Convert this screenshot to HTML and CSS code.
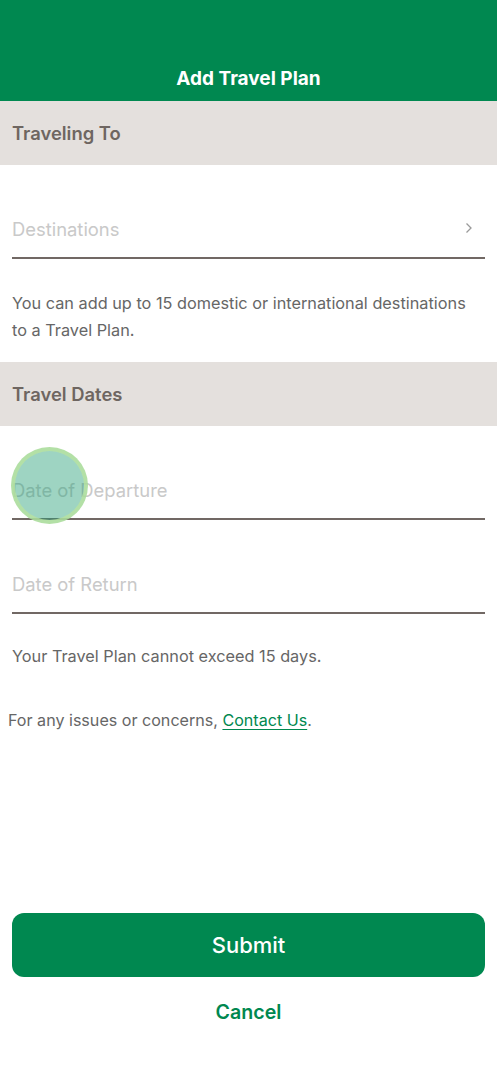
FILE: index.html
```html
<!DOCTYPE html>
<html lang="en">
<head>
<meta charset="utf-8">
<title>Add Travel Plan</title>
<link rel="stylesheet" href="styles.css">
</head>
<body>
<div class="screen">
  <header class="topbar">
    <h1 class="title">Add Travel Plan</h1>
  </header>

  <section class="section-head">Traveling To</section>
  <div class="field">
    <span class="placeholder">Destinations</span>
    <svg class="chev" width="8" height="12" viewBox="0 0 8 12"><path d="M1.5 1.5 L6 6 L1.5 10.5" fill="none" stroke="#9a9a9a" stroke-width="1.3"/></svg>
  </div>
  <p class="help">You can add up to 15 domestic or international destinations to a Travel Plan.</p>

  <section class="section-head">Travel Dates</section>
  <div class="field">
    <span class="placeholder">Date of Departure</span>
  </div>
  <div class="field">
    <span class="placeholder">Date of Return</span>
  </div>
  <p class="help help-dates">Your Travel Plan cannot exceed 15 days.</p>

  <p class="contact">For any issues or concerns, <a class="link" href="#">Contact Us</a>.</p>

  <div class="spacer"></div>

  <div class="actions">
    <button class="submit">Submit</button>
    <button class="cancel">Cancel</button>
  </div>

  <div class="touch"></div>
</div>
</body>
</html>
```

FILE: styles.css
```css
* { box-sizing: border-box; }
html, body { margin: 0; padding: 0; }
body {
  font-family: Inter, "Noto Sans", sans-serif;
  background: #fff;
  width: 497px;
  height: 1076px;
  overflow: hidden;
}
.screen {
  position: relative;
  display: flex;
  flex-direction: column;
  height: 1076px;
}
.topbar {
  background: #008850;
  height: 101px;
  display: flex;
  align-items: flex-end;
  justify-content: center;
  padding-bottom: 11px;
}
.title {
  margin: 0;
  color: #fff;
  font-size: 19px;
  font-weight: 700;
}
.section-head {
  background: #e4e0dd;
  height: 64px;
  display: flex;
  align-items: center;
  padding: 0 12px;
  color: #6e6661;
  font-size: 18.4px;
  font-weight: 600;
}
.field {
  margin: 0 12px;
  height: 94px;
  border-bottom: 2px solid #716864;
  display: flex;
  align-items: flex-end;
  justify-content: space-between;
  padding-bottom: 17px;
}
.placeholder {
  color: #c9c9c9;
  font-size: 18.4px;
}
.chev { margin-right: 12px; margin-bottom: 6px; }
.help {
  margin: 0;
  padding: 31px 12px 18px;
  color: #666;
  font-size: 16.3px;
  line-height: 27px;
}
.help-dates { padding-top: 29px; }
.contact {
  margin: 0;
  padding: 19px 8px 0;
  color: #666;
  font-size: 16.1px;
  line-height: 27px;
}
.link { color: #008850; text-decoration: underline; text-underline-offset: 3px; }
.spacer { flex: 1; }
.actions {
  display: flex;
  flex-direction: column;
  align-items: stretch;
  padding: 0 12px 29px;
}
.submit {
  height: 64px;
  border: none;
  border-radius: 12px;
  background: #008850;
  color: #fff;
  font-family: inherit;
  font-size: 22px;
  font-weight: 500;
}
.cancel {
  height: 70px;
  border: none;
  background: transparent;
  color: #008850;
  font-family: inherit;
  font-size: 19.6px;
  font-weight: 600;
}
.touch {
  position: absolute;
  left: 11px;
  top: 447px;
  width: 77px;
  height: 77px;
  border-radius: 50%;
  background: rgba(40, 160, 120, 0.45);
  border: 4px solid rgba(185, 228, 160, 0.8);
}
```
